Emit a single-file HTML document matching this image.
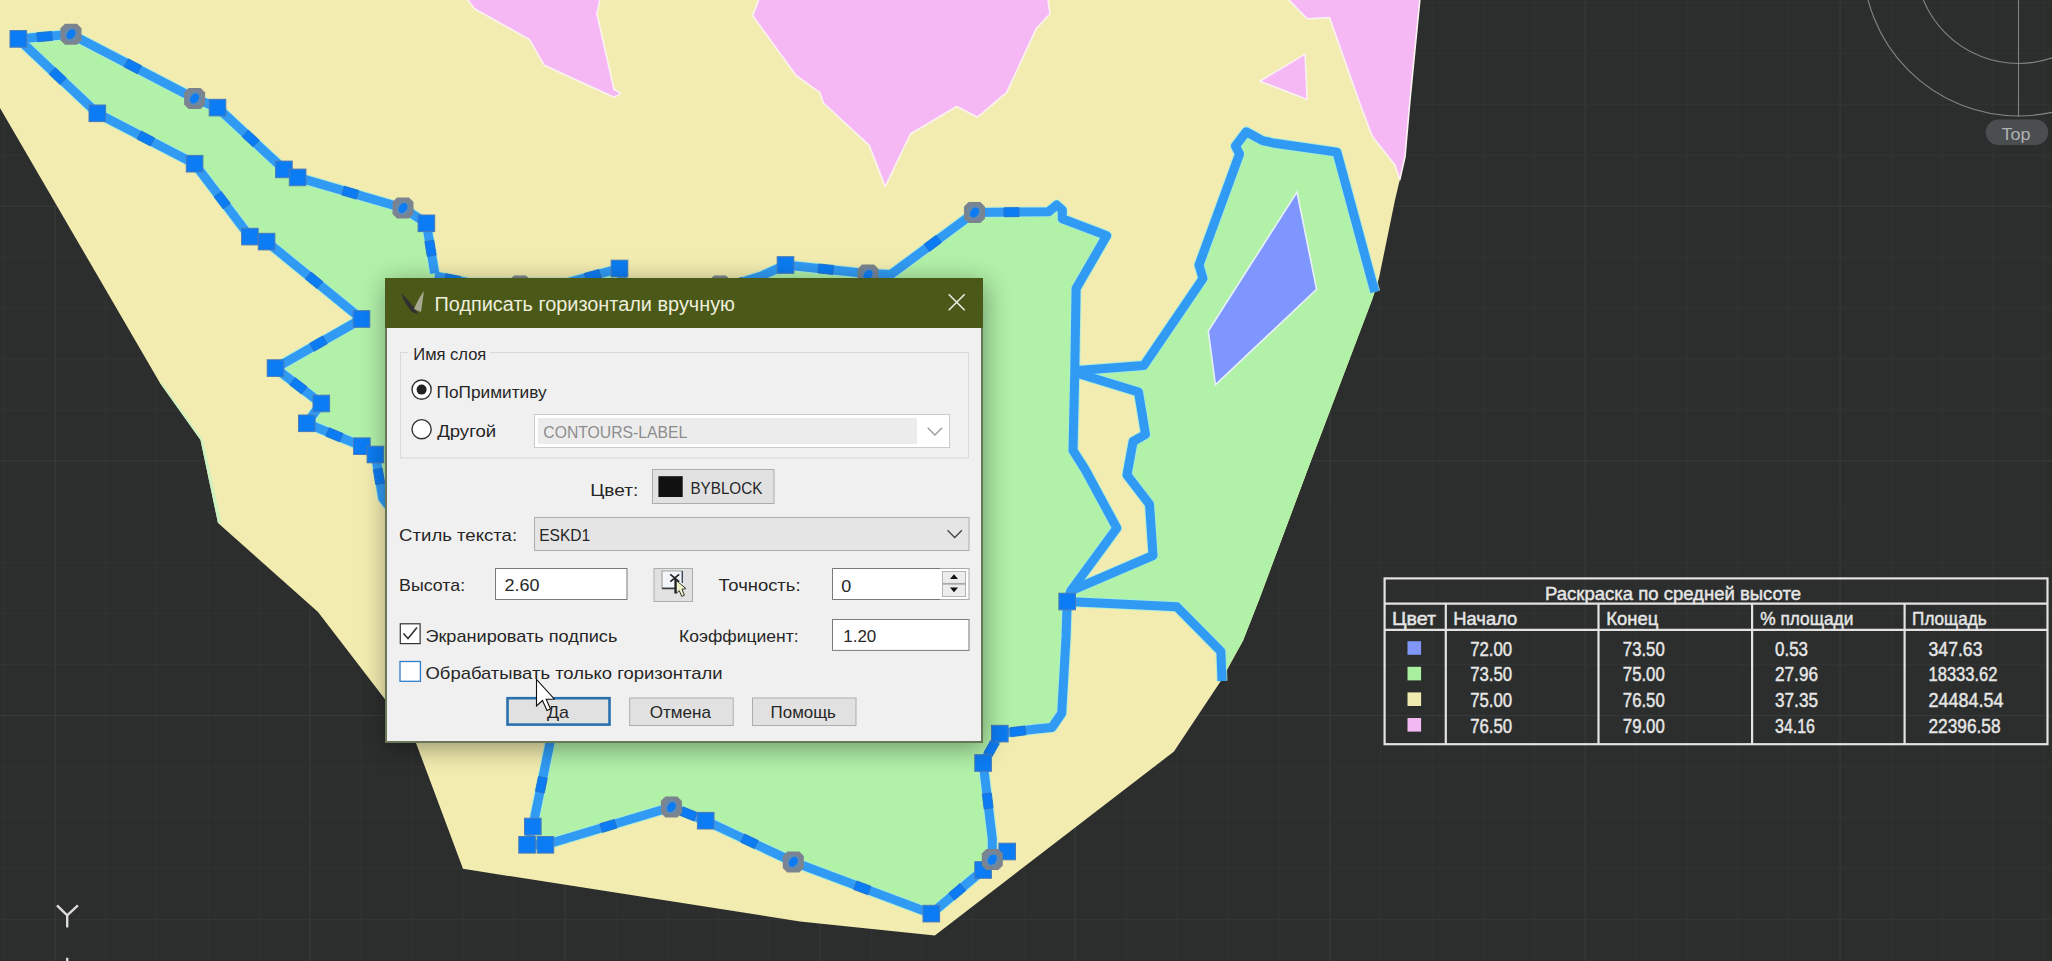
<!DOCTYPE html>
<html><head><meta charset="utf-8"><title>Подписать горизонтали вручную</title>
<style>html,body{margin:0;padding:0;width:2052px;height:961px;overflow:hidden;background:#2c2e2d;font-family:"Liberation Sans",sans-serif;}</style></head>
<body>
<div style="position:relative;width:2052px;height:961px;overflow:hidden">
<svg width="2052" height="961" style="position:absolute;left:0;top:0">
<rect width="2052" height="961" fill="#2c2e2d"/>
<rect x="3.6" y="0" width="1" height="961" fill="#333436"/>
<rect x="54.6" y="0" width="1" height="961" fill="#3a3b3e"/>
<rect x="105.6" y="0" width="1" height="961" fill="#333436"/>
<rect x="156.6" y="0" width="1" height="961" fill="#333436"/>
<rect x="207.6" y="0" width="1" height="961" fill="#333436"/>
<rect x="258.6" y="0" width="1" height="961" fill="#333436"/>
<rect x="309.6" y="0" width="1" height="961" fill="#3a3b3e"/>
<rect x="360.6" y="0" width="1" height="961" fill="#333436"/>
<rect x="411.6" y="0" width="1" height="961" fill="#333436"/>
<rect x="462.6" y="0" width="1" height="961" fill="#333436"/>
<rect x="513.6" y="0" width="1" height="961" fill="#333436"/>
<rect x="564.6" y="0" width="1" height="961" fill="#3a3b3e"/>
<rect x="615.6" y="0" width="1" height="961" fill="#333436"/>
<rect x="666.6" y="0" width="1" height="961" fill="#333436"/>
<rect x="717.6" y="0" width="1" height="961" fill="#333436"/>
<rect x="768.6" y="0" width="1" height="961" fill="#333436"/>
<rect x="819.6" y="0" width="1" height="961" fill="#3a3b3e"/>
<rect x="870.6" y="0" width="1" height="961" fill="#333436"/>
<rect x="921.6" y="0" width="1" height="961" fill="#333436"/>
<rect x="972.6" y="0" width="1" height="961" fill="#333436"/>
<rect x="1023.6" y="0" width="1" height="961" fill="#333436"/>
<rect x="1074.6" y="0" width="1" height="961" fill="#3a3b3e"/>
<rect x="1125.6" y="0" width="1" height="961" fill="#333436"/>
<rect x="1176.6" y="0" width="1" height="961" fill="#333436"/>
<rect x="1227.6" y="0" width="1" height="961" fill="#333436"/>
<rect x="1278.6" y="0" width="1" height="961" fill="#333436"/>
<rect x="1329.6" y="0" width="1" height="961" fill="#3a3b3e"/>
<rect x="1380.6" y="0" width="1" height="961" fill="#333436"/>
<rect x="1431.6" y="0" width="1" height="961" fill="#333436"/>
<rect x="1482.6" y="0" width="1" height="961" fill="#333436"/>
<rect x="1533.6" y="0" width="1" height="961" fill="#333436"/>
<rect x="1584.6" y="0" width="1" height="961" fill="#3a3b3e"/>
<rect x="1635.6" y="0" width="1" height="961" fill="#333436"/>
<rect x="1686.6" y="0" width="1" height="961" fill="#333436"/>
<rect x="1737.6" y="0" width="1" height="961" fill="#333436"/>
<rect x="1788.6" y="0" width="1" height="961" fill="#333436"/>
<rect x="1839.6" y="0" width="1" height="961" fill="#3a3b3e"/>
<rect x="1890.6" y="0" width="1" height="961" fill="#333436"/>
<rect x="1941.6" y="0" width="1" height="961" fill="#333436"/>
<rect x="1992.6" y="0" width="1" height="961" fill="#333436"/>
<rect x="2043.6" y="0" width="1" height="961" fill="#333436"/>
<rect x="0" y="1.9" width="2052" height="1" fill="#333436"/>
<rect x="0" y="52.9" width="2052" height="1" fill="#333436"/>
<rect x="0" y="103.8" width="2052" height="1" fill="#333436"/>
<rect x="0" y="154.8" width="2052" height="1" fill="#333436"/>
<rect x="0" y="205.7" width="2052" height="1" fill="#3a3b3e"/>
<rect x="0" y="256.6" width="2052" height="1" fill="#333436"/>
<rect x="0" y="307.6" width="2052" height="1" fill="#333436"/>
<rect x="0" y="358.6" width="2052" height="1" fill="#333436"/>
<rect x="0" y="409.5" width="2052" height="1" fill="#333436"/>
<rect x="0" y="460.4" width="2052" height="1" fill="#3a3b3e"/>
<rect x="0" y="511.4" width="2052" height="1" fill="#333436"/>
<rect x="0" y="562.4" width="2052" height="1" fill="#333436"/>
<rect x="0" y="613.3" width="2052" height="1" fill="#333436"/>
<rect x="0" y="664.2" width="2052" height="1" fill="#333436"/>
<rect x="0" y="715.2" width="2052" height="1" fill="#3a3b3e"/>
<rect x="0" y="766.1" width="2052" height="1" fill="#333436"/>
<rect x="0" y="817.1" width="2052" height="1" fill="#333436"/>
<rect x="0" y="868.1" width="2052" height="1" fill="#333436"/>
<rect x="0" y="919.0" width="2052" height="1" fill="#333436"/>
<polygon points="0.0,0.0 1420.0,0.0 1410.0,100.0 1405.0,156.8 1399.8,179.8 1395.0,200.0 1378.9,278.5 1372.0,300.0 1311.3,460.0 1259.0,600.0 1243.0,640.7 1221.8,679.6 1178.6,744.6 1174.0,751.5 934.8,935.5 800.0,921.5 463.0,868.8 416.0,742.9 385.6,700.0 318.0,612.0 218.0,523.0 200.5,440.0 160.0,383.0 0.0,108.0" fill="#f2ecb0"/>
<polygon points="160.0,383.0 200.5,440.0 218.0,523.0 221.5,523.0 203.0,440.0 162.0,383.0" fill="#cdf2c0"/>
<polygon points="18.3,38.9 71.0,34.3 194.6,98.4 217.5,107.6 283.9,169.4 297.6,177.4 403.0,208.0 426.4,223.3 434.7,273.3 470.0,283.0 566.0,283.0 619.5,268.5 626.0,292.0 520.0,500.0 400.0,520.0 382.7,498.2 375.4,454.5 361.9,446.2 306.8,423.3 321.3,403.5 275.5,368.1 361.5,319.0 266.6,241.6 249.9,236.6 194.6,163.7 97.3,113.3" fill="#b1f1a8"/>
<polygon points="710.0,292.0 761.4,276.0 785.5,265.0 866.0,273.5 891.0,274.4 974.5,212.5 1048.6,211.8 1056.7,205.0 1062.3,210.0 1062.3,218.7 1106.7,235.6 1076.1,288.6 1074.8,370.8 1073.0,450.4 1085.4,470.0 1116.8,528.1 1070.8,590.9 1067.2,601.5 1066.1,635.4 1061.7,713.2 1052.0,727.4 1036.0,729.0 999.8,733.6 983.1,763.0 992.3,838.9 992.3,859.6 983.1,870.0 931.3,913.6 793.3,861.9 705.7,820.7 671.4,807.0 545.4,844.8 527.1,844.8 532.8,826.5 550.0,742.9 560.0,600.0 700.0,400.0" fill="#b1f1a8"/>
<polygon points="1374.8,292.0 1336.9,152.1 1274.7,143.3 1262.5,140.6 1246.3,131.8 1235.5,146.0 1239.5,154.1 1199.0,265.0 1203.0,278.5 1143.8,365.5 1074.8,370.8 1138.5,392.0 1145.5,434.4 1133.1,441.5 1127.0,475.0 1149.5,504.2 1153.0,555.5 1070.8,590.9 1067.2,601.5 1176.9,606.8 1220.9,651.3 1221.8,677.8 1243.0,640.7 1259.0,600.0 1311.3,460.0 1372.0,300.0" fill="#b1f1a8"/>
<polygon points="466.4,-2.0 474.4,8.7 529.3,39.4 544.2,65.2 614.0,97.3 621.0,93.4 614.0,89.3 596.9,13.7 600.3,-2.0" fill="#f5b8f5" stroke="#fbf3f0" stroke-width="1.6" stroke-linejoin="round"/>
<polygon points="759.4,-2.0 752.6,15.6 796.0,75.5 820.0,92.7 823.4,103.0 869.2,145.4 885.2,186.6 910.4,134.0 956.7,106.5 977.5,117.2 1006.6,92.7 1036.3,28.6 1050.0,13.7 1047.8,-2.0" fill="#f5b8f5" stroke="#fbf3f0" stroke-width="1.6" stroke-linejoin="round"/>
<polygon points="1305.1,54.1 1259.8,81.2 1307.2,99.4" fill="#f5b8f5" stroke="#fbf3f0" stroke-width="1.6" stroke-linejoin="round"/>
<polygon points="1286.9,-2.0 1307.2,18.9 1329.5,17.6 1358.6,100.0 1370.7,132.5 1373.5,137.9 1395.0,165.0 1399.8,179.8 1405.0,156.8 1410.0,100.0 1420.0,-2.0" fill="#f5b8f5" stroke="#fbf3f0" stroke-width="1.6" stroke-linejoin="round"/>
<polygon points="1297.0,192.0 1316.6,289.3 1215.4,384.9 1208.3,331.0" fill="#7e96fe" stroke="#e8f2f6" stroke-width="1.6"/>
<polyline points="434.7,276.0 470.0,283.0 566.0,283.0 619.5,268.5 626.0,292.0 710.0,292.0 761.4,276.0 785.5,265.0 866.0,273.5 891.0,274.4 974.5,212.5 1048.6,211.8 1056.7,205.0 1062.3,210.0 1062.3,218.7 1106.7,235.6 1076.1,288.6 1074.8,370.8 1073.0,450.4 1085.4,470.0 1116.8,528.1 1070.8,590.9 1067.2,601.5 1066.1,635.4 1061.7,713.2 1052.0,727.4 1036.0,729.0 999.8,733.6 983.1,763.0 992.3,838.9 992.3,859.6 983.1,870.0 931.3,913.6 793.3,861.9 705.7,820.7 671.4,807.0 545.4,844.8 527.1,844.8 532.8,826.5 550.0,742.9 560.0,700.0" fill="none" stroke="#a6ecde" stroke-width="11" stroke-linejoin="round" opacity="0.8"/>
<polyline points="18.3,38.9 71.0,34.3 194.6,98.4 217.5,107.6 283.9,169.4 297.6,177.4 403.0,208.0 426.4,223.3 434.7,273.3" fill="none" stroke="#a6ecde" stroke-width="11" stroke-linejoin="round" opacity="0.8"/>
<polyline points="18.3,38.9 97.3,113.3 194.6,163.7 249.9,236.6 266.6,241.6 361.5,319.0 275.5,368.1 321.3,403.5 306.8,423.3 361.9,446.2 375.4,454.5 382.7,498.2 400.0,520.0" fill="none" stroke="#a6ecde" stroke-width="11" stroke-linejoin="round" opacity="0.8"/>
<polyline points="1374.8,292.0 1336.9,152.1 1274.7,143.3 1262.5,140.6 1246.3,131.8 1235.5,146.0 1239.5,154.1 1199.0,265.0 1203.0,278.5 1143.8,365.5 1074.8,370.8" fill="none" stroke="#a6ecde" stroke-width="11" stroke-linejoin="round" opacity="0.8"/>
<polyline points="1074.8,372.5 1138.5,392.0 1145.5,434.4 1133.1,441.5 1127.0,475.0 1149.5,504.2 1153.0,555.5 1070.8,590.9" fill="none" stroke="#a6ecde" stroke-width="11" stroke-linejoin="round" opacity="0.8"/>
<polyline points="1067.2,601.5 1176.9,606.8 1220.9,651.3 1222.0,681.0" fill="none" stroke="#a6ecde" stroke-width="11" stroke-linejoin="round" opacity="0.8"/>
<polyline points="434.7,276.0 470.0,283.0 566.0,283.0 619.5,268.5 626.0,292.0 710.0,292.0 761.4,276.0 785.5,265.0 866.0,273.5 891.0,274.4 974.5,212.5 1048.6,211.8 1056.7,205.0 1062.3,210.0 1062.3,218.7 1106.7,235.6 1076.1,288.6 1074.8,370.8 1073.0,450.4 1085.4,470.0 1116.8,528.1 1070.8,590.9 1067.2,601.5 1066.1,635.4 1061.7,713.2 1052.0,727.4 1036.0,729.0 999.8,733.6 983.1,763.0 992.3,838.9 992.3,859.6 983.1,870.0 931.3,913.6 793.3,861.9 705.7,820.7 671.4,807.0 545.4,844.8 527.1,844.8 532.8,826.5 550.0,742.9 560.0,700.0" fill="none" stroke="#319bf4" stroke-width="9" stroke-linejoin="round"/>
<polyline points="18.3,38.9 71.0,34.3 194.6,98.4 217.5,107.6 283.9,169.4 297.6,177.4 403.0,208.0 426.4,223.3 434.7,273.3" fill="none" stroke="#319bf4" stroke-width="9" stroke-linejoin="round"/>
<polyline points="18.3,38.9 97.3,113.3 194.6,163.7 249.9,236.6 266.6,241.6 361.5,319.0 275.5,368.1 321.3,403.5 306.8,423.3 361.9,446.2 375.4,454.5 382.7,498.2 400.0,520.0" fill="none" stroke="#319bf4" stroke-width="9" stroke-linejoin="round"/>
<polyline points="1374.8,292.0 1336.9,152.1 1274.7,143.3 1262.5,140.6 1246.3,131.8 1235.5,146.0 1239.5,154.1 1199.0,265.0 1203.0,278.5 1143.8,365.5 1074.8,370.8" fill="none" stroke="#319bf4" stroke-width="9" stroke-linejoin="round"/>
<polyline points="1074.8,372.5 1138.5,392.0 1145.5,434.4 1133.1,441.5 1127.0,475.0 1149.5,504.2 1153.0,555.5 1070.8,590.9" fill="none" stroke="#319bf4" stroke-width="9" stroke-linejoin="round"/>
<polyline points="1067.2,601.5 1176.9,606.8 1220.9,651.3 1222.0,681.0" fill="none" stroke="#319bf4" stroke-width="9" stroke-linejoin="round"/>
<rect x="-7.5" y="-4.5" width="15" height="9" fill="#0b7cf3" stroke="#2a6fc0" stroke-width="0.8" transform="translate(44.6,36.6) rotate(-5.0)"/>
<rect x="-7.5" y="-4.5" width="15" height="9" fill="#0b7cf3" stroke="#2a6fc0" stroke-width="0.8" transform="translate(132.8,66.3) rotate(27.4)"/>
<rect x="-7.5" y="-4.5" width="15" height="9" fill="#0b7cf3" stroke="#2a6fc0" stroke-width="0.8" transform="translate(250.7,138.5) rotate(42.9)"/>
<rect x="-7.5" y="-4.5" width="15" height="9" fill="#0b7cf3" stroke="#2a6fc0" stroke-width="0.8" transform="translate(350.3,192.7) rotate(16.2)"/>
<rect x="-7.5" y="-4.5" width="15" height="9" fill="#0b7cf3" stroke="#2a6fc0" stroke-width="0.8" transform="translate(430.5,248.3) rotate(80.6)"/>
<rect x="-7.5" y="-4.5" width="15" height="9" fill="#0b7cf3" stroke="#2a6fc0" stroke-width="0.8" transform="translate(57.8,76.1) rotate(43.3)"/>
<rect x="-7.5" y="-4.5" width="15" height="9" fill="#0b7cf3" stroke="#2a6fc0" stroke-width="0.8" transform="translate(145.9,138.5) rotate(27.4)"/>
<rect x="-7.5" y="-4.5" width="15" height="9" fill="#0b7cf3" stroke="#2a6fc0" stroke-width="0.8" transform="translate(222.2,200.1) rotate(52.8)"/>
<rect x="-7.5" y="-4.5" width="15" height="9" fill="#0b7cf3" stroke="#2a6fc0" stroke-width="0.8" transform="translate(314.1,280.3) rotate(39.2)"/>
<rect x="-7.5" y="-4.5" width="15" height="9" fill="#0b7cf3" stroke="#2a6fc0" stroke-width="0.8" transform="translate(318.5,343.6) rotate(150.3)"/>
<rect x="-7.5" y="-4.5" width="15" height="9" fill="#0b7cf3" stroke="#2a6fc0" stroke-width="0.8" transform="translate(298.4,385.8) rotate(37.7)"/>
<rect x="-7.5" y="-4.5" width="15" height="9" fill="#0b7cf3" stroke="#2a6fc0" stroke-width="0.8" transform="translate(334.4,434.8) rotate(22.6)"/>
<rect x="-7.5" y="-4.5" width="15" height="9" fill="#0b7cf3" stroke="#2a6fc0" stroke-width="0.8" transform="translate(379.0,476.4) rotate(80.5)"/>
<rect x="-7.5" y="-4.5" width="15" height="9" fill="#0b7cf3" stroke="#2a6fc0" stroke-width="0.8" transform="translate(452.4,279.5) rotate(11.2)"/>
<rect x="-7.5" y="-4.5" width="15" height="9" fill="#0b7cf3" stroke="#2a6fc0" stroke-width="0.8" transform="translate(518.0,283.0) rotate(0.0)"/>
<rect x="-7.5" y="-4.5" width="15" height="9" fill="#0b7cf3" stroke="#2a6fc0" stroke-width="0.8" transform="translate(592.8,275.8) rotate(-15.2)"/>
<rect x="-7.5" y="-4.5" width="15" height="9" fill="#0b7cf3" stroke="#2a6fc0" stroke-width="0.8" transform="translate(668.0,292.0) rotate(0.0)"/>
<rect x="-7.5" y="-4.5" width="15" height="9" fill="#0b7cf3" stroke="#2a6fc0" stroke-width="0.8" transform="translate(735.7,284.0) rotate(-17.3)"/>
<rect x="-7.5" y="-4.5" width="15" height="9" fill="#0b7cf3" stroke="#2a6fc0" stroke-width="0.8" transform="translate(825.8,269.2) rotate(6.0)"/>
<rect x="-7.5" y="-4.5" width="15" height="9" fill="#0b7cf3" stroke="#2a6fc0" stroke-width="0.8" transform="translate(932.8,243.4) rotate(-36.6)"/>
<rect x="-7.5" y="-4.5" width="15" height="9" fill="#0b7cf3" stroke="#2a6fc0" stroke-width="0.8" transform="translate(1011.5,212.2) rotate(-0.5)"/>
<rect x="-7.5" y="-4.5" width="15" height="9" fill="#0b7cf3" stroke="#2a6fc0" stroke-width="0.8" transform="translate(1017.9,731.3) rotate(172.8)"/>
<rect x="-7.5" y="-4.5" width="15" height="9" fill="#0b7cf3" stroke="#2a6fc0" stroke-width="0.8" transform="translate(991.5,748.3) rotate(119.6)"/>
<rect x="-7.5" y="-4.5" width="15" height="9" fill="#0b7cf3" stroke="#2a6fc0" stroke-width="0.8" transform="translate(987.7,801.0) rotate(83.1)"/>
<rect x="-7.5" y="-4.5" width="15" height="9" fill="#0b7cf3" stroke="#2a6fc0" stroke-width="0.8" transform="translate(957.2,891.8) rotate(139.9)"/>
<rect x="-7.5" y="-4.5" width="15" height="9" fill="#0b7cf3" stroke="#2a6fc0" stroke-width="0.8" transform="translate(862.3,887.8) rotate(-159.5)"/>
<rect x="-7.5" y="-4.5" width="15" height="9" fill="#0b7cf3" stroke="#2a6fc0" stroke-width="0.8" transform="translate(749.5,841.3) rotate(-154.8)"/>
<rect x="-7.5" y="-4.5" width="15" height="9" fill="#0b7cf3" stroke="#2a6fc0" stroke-width="0.8" transform="translate(688.5,813.9) rotate(-158.2)"/>
<rect x="-7.5" y="-4.5" width="15" height="9" fill="#0b7cf3" stroke="#2a6fc0" stroke-width="0.8" transform="translate(608.4,825.9) rotate(163.3)"/>
<rect x="-7.5" y="-4.5" width="15" height="9" fill="#0b7cf3" stroke="#2a6fc0" stroke-width="0.8" transform="translate(541.4,784.7) rotate(-78.4)"/>
<rect x="-7.5" y="-4.5" width="15" height="9" fill="#0b7cf3" stroke="#2a6fc0" stroke-width="0.8" transform="translate(555.0,721.5) rotate(-76.9)"/>
<rect x="10.0" y="30.6" width="16.6" height="16.6" fill="#0b7cf3" stroke="#4a7bb8" stroke-width="1"/>
<rect x="89.0" y="105.0" width="16.6" height="16.6" fill="#0b7cf3" stroke="#4a7bb8" stroke-width="1"/>
<rect x="186.3" y="155.4" width="16.6" height="16.6" fill="#0b7cf3" stroke="#4a7bb8" stroke-width="1"/>
<rect x="209.2" y="99.3" width="16.6" height="16.6" fill="#0b7cf3" stroke="#4a7bb8" stroke-width="1"/>
<rect x="275.6" y="161.1" width="16.6" height="16.6" fill="#0b7cf3" stroke="#4a7bb8" stroke-width="1"/>
<rect x="289.3" y="169.1" width="16.6" height="16.6" fill="#0b7cf3" stroke="#4a7bb8" stroke-width="1"/>
<rect x="418.1" y="215.0" width="16.6" height="16.6" fill="#0b7cf3" stroke="#4a7bb8" stroke-width="1"/>
<rect x="353.2" y="310.7" width="16.6" height="16.6" fill="#0b7cf3" stroke="#4a7bb8" stroke-width="1"/>
<rect x="267.2" y="359.8" width="16.6" height="16.6" fill="#0b7cf3" stroke="#4a7bb8" stroke-width="1"/>
<rect x="313.0" y="395.2" width="16.6" height="16.6" fill="#0b7cf3" stroke="#4a7bb8" stroke-width="1"/>
<rect x="298.5" y="415.0" width="16.6" height="16.6" fill="#0b7cf3" stroke="#4a7bb8" stroke-width="1"/>
<rect x="353.6" y="437.9" width="16.6" height="16.6" fill="#0b7cf3" stroke="#4a7bb8" stroke-width="1"/>
<rect x="367.1" y="446.2" width="16.6" height="16.6" fill="#0b7cf3" stroke="#4a7bb8" stroke-width="1"/>
<rect x="611.2" y="260.2" width="16.6" height="16.6" fill="#0b7cf3" stroke="#4a7bb8" stroke-width="1"/>
<rect x="777.2" y="256.7" width="16.6" height="16.6" fill="#0b7cf3" stroke="#4a7bb8" stroke-width="1"/>
<rect x="1058.9" y="593.2" width="16.6" height="16.6" fill="#0b7cf3" stroke="#4a7bb8" stroke-width="1"/>
<rect x="991.5" y="725.3" width="16.6" height="16.6" fill="#0b7cf3" stroke="#4a7bb8" stroke-width="1"/>
<rect x="974.8" y="754.7" width="16.6" height="16.6" fill="#0b7cf3" stroke="#4a7bb8" stroke-width="1"/>
<rect x="998.9" y="843.2" width="16.6" height="16.6" fill="#0b7cf3" stroke="#4a7bb8" stroke-width="1"/>
<rect x="974.8" y="861.7" width="16.6" height="16.6" fill="#0b7cf3" stroke="#4a7bb8" stroke-width="1"/>
<rect x="923.0" y="905.3" width="16.6" height="16.6" fill="#0b7cf3" stroke="#4a7bb8" stroke-width="1"/>
<rect x="697.4" y="812.4" width="16.6" height="16.6" fill="#0b7cf3" stroke="#4a7bb8" stroke-width="1"/>
<rect x="524.5" y="818.2" width="16.6" height="16.6" fill="#0b7cf3" stroke="#4a7bb8" stroke-width="1"/>
<rect x="518.8" y="836.5" width="16.6" height="16.6" fill="#0b7cf3" stroke="#4a7bb8" stroke-width="1"/>
<rect x="537.1" y="836.5" width="16.6" height="16.6" fill="#0b7cf3" stroke="#4a7bb8" stroke-width="1"/>
<rect x="241.6" y="228.3" width="16.6" height="16.6" fill="#0b7cf3" stroke="#4a7bb8" stroke-width="1"/>
<rect x="258.3" y="233.3" width="16.6" height="16.6" fill="#0b7cf3" stroke="#4a7bb8" stroke-width="1"/>
<polygon points="65.0,23.8 77.0,23.8 81.5,28.3 81.5,40.3 77.0,44.8 65.0,44.8 60.5,40.3 60.5,28.3" fill="#7b848e"/><circle cx="71.0" cy="34.3" r="7.5" fill="#6b88a6"/><ellipse cx="71.0" cy="34.3" rx="4" ry="5.5" transform="rotate(35 71.0 34.3)" fill="#0b7cf3"/>
<polygon points="188.6,87.9 200.6,87.9 205.1,92.4 205.1,104.4 200.6,108.9 188.6,108.9 184.1,104.4 184.1,92.4" fill="#7b848e"/><circle cx="194.6" cy="98.4" r="7.5" fill="#6b88a6"/><ellipse cx="194.6" cy="98.4" rx="4" ry="5.5" transform="rotate(35 194.6 98.4)" fill="#0b7cf3"/>
<polygon points="397.0,197.5 409.0,197.5 413.5,202.0 413.5,214.0 409.0,218.5 397.0,218.5 392.5,214.0 392.5,202.0" fill="#7b848e"/><circle cx="403.0" cy="208.0" r="7.5" fill="#6b88a6"/><ellipse cx="403.0" cy="208.0" rx="4" ry="5.5" transform="rotate(35 403.0 208.0)" fill="#0b7cf3"/>
<polygon points="968.5,202.0 980.5,202.0 985.0,206.5 985.0,218.5 980.5,223.0 968.5,223.0 964.0,218.5 964.0,206.5" fill="#7b848e"/><circle cx="974.5" cy="212.5" r="7.5" fill="#6b88a6"/><ellipse cx="974.5" cy="212.5" rx="4" ry="5.5" transform="rotate(35 974.5 212.5)" fill="#0b7cf3"/>
<polygon points="665.4,796.5 677.4,796.5 681.9,801.0 681.9,813.0 677.4,817.5 665.4,817.5 660.9,813.0 660.9,801.0" fill="#7b848e"/><circle cx="671.4" cy="807.0" r="7.5" fill="#6b88a6"/><ellipse cx="671.4" cy="807.0" rx="4" ry="5.5" transform="rotate(35 671.4 807.0)" fill="#0b7cf3"/>
<polygon points="787.3,851.4 799.3,851.4 803.8,855.9 803.8,867.9 799.3,872.4 787.3,872.4 782.8,867.9 782.8,855.9" fill="#7b848e"/><circle cx="793.3" cy="861.9" r="7.5" fill="#6b88a6"/><ellipse cx="793.3" cy="861.9" rx="4" ry="5.5" transform="rotate(35 793.3 861.9)" fill="#0b7cf3"/>
<polygon points="986.3,849.1 998.3,849.1 1002.8,853.6 1002.8,865.6 998.3,870.1 986.3,870.1 981.8,865.6 981.8,853.6" fill="#7b848e"/><circle cx="992.3" cy="859.6" r="7.5" fill="#6b88a6"/><ellipse cx="992.3" cy="859.6" rx="4" ry="5.5" transform="rotate(35 992.3 859.6)" fill="#0b7cf3"/>
<polygon points="862.0,264.5 874.0,264.5 878.5,269.0 878.5,281.0 874.0,285.5 862.0,285.5 857.5,281.0 857.5,269.0" fill="#7b848e"/><circle cx="868.0" cy="275.0" r="7.5" fill="#6b88a6"/><ellipse cx="868.0" cy="275.0" rx="4" ry="5.5" transform="rotate(35 868.0 275.0)" fill="#0b7cf3"/>
<polygon points="714.0,275.5 726.0,275.5 730.5,280.0 730.5,292.0 726.0,296.5 714.0,296.5 709.5,292.0 709.5,280.0" fill="#7b848e"/><circle cx="720.0" cy="286.0" r="7.5" fill="#6b88a6"/><ellipse cx="720.0" cy="286.0" rx="4" ry="5.5" transform="rotate(35 720.0 286.0)" fill="#0b7cf3"/>
<polygon points="514.0,275.5 526.0,275.5 530.5,280.0 530.5,292.0 526.0,296.5 514.0,296.5 509.5,292.0 509.5,280.0" fill="#7b848e"/><circle cx="520.0" cy="286.0" r="7.5" fill="#6b88a6"/><ellipse cx="520.0" cy="286.0" rx="4" ry="5.5" transform="rotate(35 520.0 286.0)" fill="#0b7cf3"/>
</svg>
<svg width="2052" height="961" style="position:absolute;left:0;top:0">
<g fill="none" stroke="#7f8686" stroke-width="1.1">
<circle cx="2018.5" cy="-39.5" r="155.5"/><circle cx="2018.5" cy="-39.5" r="103"/>
<line x1="2018.5" y1="0" x2="2018.5" y2="116.5"/></g>
<rect x="1985.7" y="119.6" width="62.5" height="25.4" rx="12.7" fill="#4a4e50"/>
<text x="2001.5" y="139.5" font-family='"Liberation Sans",sans-serif' font-size="17" fill="#aeb2b2" text-anchor="start" textLength="29" lengthAdjust="spacingAndGlyphs" >Top</text>
<g stroke="#dcdcdc" stroke-width="2.4" fill="none"><polyline points="57,905.3 67.2,915.4 77.9,905.3"/><line x1="67.2" y1="915.4" x2="67.2" y2="927.4"/><line x1="67.2" y1="957.8" x2="67.2" y2="962"/></g>
<g stroke="#e3e3e3" stroke-width="2.2" fill="none">
<rect x="1384.6" y="578.4" width="662.9" height="165.8"/>
<line x1="1384.6" y1="603.7" x2="2047.5" y2="603.7"/><line x1="1384.6" y1="629.9" x2="2047.5" y2="629.9"/>
<line x1="1445.8" y1="603.7" x2="1445.8" y2="744.2"/>
<line x1="1598.5" y1="603.7" x2="1598.5" y2="744.2"/>
<line x1="1752.1" y1="603.7" x2="1752.1" y2="744.2"/>
<line x1="1904.6" y1="603.7" x2="1904.6" y2="744.2"/>
</g>
<text x="1545" y="599.6" font-family='"Liberation Sans",sans-serif' font-size="19" fill="#e6e6e6" text-anchor="start" textLength="256" lengthAdjust="spacingAndGlyphs" stroke="#e6e6e6" stroke-width="0.45">Раскраска по средней высоте</text>
<text x="1392.1" y="625.2" font-family='"Liberation Sans",sans-serif' font-size="19" fill="#e6e6e6" text-anchor="start" textLength="44" lengthAdjust="spacingAndGlyphs" stroke="#e6e6e6" stroke-width="0.45">Цвет</text>
<text x="1453.3" y="625.2" font-family='"Liberation Sans",sans-serif' font-size="19" fill="#e6e6e6" text-anchor="start" textLength="64" lengthAdjust="spacingAndGlyphs" stroke="#e6e6e6" stroke-width="0.45">Начало</text>
<text x="1606.3" y="625.2" font-family='"Liberation Sans",sans-serif' font-size="19" fill="#e6e6e6" text-anchor="start" textLength="52" lengthAdjust="spacingAndGlyphs" stroke="#e6e6e6" stroke-width="0.45">Конец</text>
<text x="1760.3" y="625.2" font-family='"Liberation Sans",sans-serif' font-size="19" fill="#e6e6e6" text-anchor="start" textLength="93" lengthAdjust="spacingAndGlyphs" stroke="#e6e6e6" stroke-width="0.45">% площади</text>
<text x="1912.1" y="625.2" font-family='"Liberation Sans",sans-serif' font-size="19" fill="#e6e6e6" text-anchor="start" textLength="74.5" lengthAdjust="spacingAndGlyphs" stroke="#e6e6e6" stroke-width="0.45">Площадь</text>
<rect x="1407.5" y="641.2" width="13.6" height="13.6" fill="#8096f8"/>
<text x="1470.2" y="655.8" font-family='"Liberation Sans",sans-serif' font-size="20" fill="#e6e6e6" text-anchor="start" textLength="42" lengthAdjust="spacingAndGlyphs" stroke="#e6e6e6" stroke-width="0.45">72.00</text>
<text x="1622.8" y="655.8" font-family='"Liberation Sans",sans-serif' font-size="20" fill="#e6e6e6" text-anchor="start" textLength="42" lengthAdjust="spacingAndGlyphs" stroke="#e6e6e6" stroke-width="0.45">73.50</text>
<text x="1775" y="655.8" font-family='"Liberation Sans",sans-serif' font-size="20" fill="#e6e6e6" text-anchor="start" textLength="33" lengthAdjust="spacingAndGlyphs" stroke="#e6e6e6" stroke-width="0.45">0.53</text>
<text x="1928.5" y="655.8" font-family='"Liberation Sans",sans-serif' font-size="20" fill="#e6e6e6" text-anchor="start" textLength="54" lengthAdjust="spacingAndGlyphs" stroke="#e6e6e6" stroke-width="0.45">347.63</text>
<rect x="1407.5" y="666.8" width="13.6" height="13.6" fill="#a8f0a0"/>
<text x="1470.2" y="681.4" font-family='"Liberation Sans",sans-serif' font-size="20" fill="#e6e6e6" text-anchor="start" textLength="42" lengthAdjust="spacingAndGlyphs" stroke="#e6e6e6" stroke-width="0.45">73.50</text>
<text x="1622.8" y="681.4" font-family='"Liberation Sans",sans-serif' font-size="20" fill="#e6e6e6" text-anchor="start" textLength="42" lengthAdjust="spacingAndGlyphs" stroke="#e6e6e6" stroke-width="0.45">75.00</text>
<text x="1775" y="681.4" font-family='"Liberation Sans",sans-serif' font-size="20" fill="#e6e6e6" text-anchor="start" textLength="43" lengthAdjust="spacingAndGlyphs" stroke="#e6e6e6" stroke-width="0.45">27.96</text>
<text x="1928.5" y="681.4" font-family='"Liberation Sans",sans-serif' font-size="20" fill="#e6e6e6" text-anchor="start" textLength="69" lengthAdjust="spacingAndGlyphs" stroke="#e6e6e6" stroke-width="0.45">18333.62</text>
<rect x="1407.5" y="692.4" width="13.6" height="13.6" fill="#f0eab0"/>
<text x="1470.2" y="707.0" font-family='"Liberation Sans",sans-serif' font-size="20" fill="#e6e6e6" text-anchor="start" textLength="42" lengthAdjust="spacingAndGlyphs" stroke="#e6e6e6" stroke-width="0.45">75.00</text>
<text x="1622.8" y="707.0" font-family='"Liberation Sans",sans-serif' font-size="20" fill="#e6e6e6" text-anchor="start" textLength="42" lengthAdjust="spacingAndGlyphs" stroke="#e6e6e6" stroke-width="0.45">76.50</text>
<text x="1775" y="707.0" font-family='"Liberation Sans",sans-serif' font-size="20" fill="#e6e6e6" text-anchor="start" textLength="43" lengthAdjust="spacingAndGlyphs" stroke="#e6e6e6" stroke-width="0.45">37.35</text>
<text x="1928.5" y="707.0" font-family='"Liberation Sans",sans-serif' font-size="20" fill="#e6e6e6" text-anchor="start" textLength="75" lengthAdjust="spacingAndGlyphs" stroke="#e6e6e6" stroke-width="0.45">24484.54</text>
<rect x="1407.5" y="718.0" width="13.6" height="13.6" fill="#f2b8f2"/>
<text x="1470.2" y="732.6" font-family='"Liberation Sans",sans-serif' font-size="20" fill="#e6e6e6" text-anchor="start" textLength="42" lengthAdjust="spacingAndGlyphs" stroke="#e6e6e6" stroke-width="0.45">76.50</text>
<text x="1622.8" y="732.6" font-family='"Liberation Sans",sans-serif' font-size="20" fill="#e6e6e6" text-anchor="start" textLength="42" lengthAdjust="spacingAndGlyphs" stroke="#e6e6e6" stroke-width="0.45">79.00</text>
<text x="1775" y="732.6" font-family='"Liberation Sans",sans-serif' font-size="20" fill="#e6e6e6" text-anchor="start" textLength="40" lengthAdjust="spacingAndGlyphs" stroke="#e6e6e6" stroke-width="0.45">34.16</text>
<text x="1928.5" y="732.6" font-family='"Liberation Sans",sans-serif' font-size="20" fill="#e6e6e6" text-anchor="start" textLength="72" lengthAdjust="spacingAndGlyphs" stroke="#e6e6e6" stroke-width="0.45">22396.58</text>
</svg>
<div style="position:absolute;left:385px;top:278px;width:598px;height:465px;background:#f0f0f0;box-shadow:2px 5px 24px rgba(0,0,0,0.38);"></div>
<div style="position:absolute;left:385px;top:278px;width:598px;height:50px;background:#4b5918;"></div>
<svg width="2052" height="961" style="position:absolute;left:0;top:0">
<path d="M386,328 V742 H982 V328" fill="none" stroke="#687757" stroke-width="2"/>
<path d="M401,293 C408,300 414,306 418,314 L412,312 C407,306 403,300 401,293 Z" fill="#303030"/>
<path d="M424,291 L421,312 L414,309 C417,302 420,296 424,291 Z" fill="#a8a890"/>
<text x="434.5" y="310.5" font-family='"Liberation Sans",sans-serif' font-size="20" fill="#eeeedc" text-anchor="start" textLength="300.5" lengthAdjust="spacingAndGlyphs" >Подписать горизонтали вручную</text>
<g stroke="#ecece4" stroke-width="1.6"><line x1="948.7" y1="294.3" x2="964.7" y2="310.3"/><line x1="964.7" y1="294.3" x2="948.7" y2="310.3"/></g>
<rect x="400.5" y="352.5" width="568" height="105.5" fill="none" stroke="#d9d9d9" stroke-width="1"/>
<rect x="408" y="345" width="82" height="14" fill="#f0f0f0"/>
<text x="413.3" y="360.1" font-family='"Liberation Sans",sans-serif' font-size="17" fill="#262626" text-anchor="start" textLength="73" lengthAdjust="spacingAndGlyphs" >Имя слоя</text>
<circle cx="421.6" cy="389.6" r="9.6" fill="#fff" stroke="#333" stroke-width="1.4"/><circle cx="421.6" cy="389.6" r="5" fill="#222"/>
<text x="436.6" y="397.5" font-family='"Liberation Sans",sans-serif' font-size="17" fill="#262626" text-anchor="start" textLength="110" lengthAdjust="spacingAndGlyphs" >ПоПримитиву</text>
<circle cx="421.6" cy="429.2" r="9.6" fill="#fff" stroke="#333" stroke-width="1.4"/>
<text x="437.2" y="437.1" font-family='"Liberation Sans",sans-serif' font-size="17" fill="#262626" text-anchor="start" textLength="59" lengthAdjust="spacingAndGlyphs" >Другой</text>
<rect x="534.5" y="414.5" width="415" height="33" fill="#fff" stroke="#cbcbcb" stroke-width="1"/>
<rect x="538" y="418" width="379" height="26" fill="#ececec"/>
<polyline points="927.7,427.8 934.9,435 942.1,427.8" fill="none" stroke="#9a9a9a" stroke-width="1.3"/>
<text x="543.3" y="437.6" font-family='"Liberation Sans",sans-serif' font-size="17" fill="#8c8c8c" text-anchor="start" textLength="144" lengthAdjust="spacingAndGlyphs" >CONTOURS-LABEL</text>
<text x="590.2" y="496.4" font-family='"Liberation Sans",sans-serif' font-size="17" fill="#262626" text-anchor="start" textLength="48" lengthAdjust="spacingAndGlyphs" >Цвет:</text>
<rect x="652.5" y="469.5" width="121.5" height="34" fill="#e1e1e1" stroke="#adadad" stroke-width="1"/>
<rect x="658.4" y="476.2" width="24.3" height="20.8" fill="#111"/>
<text x="690.4" y="494.3" font-family='"Liberation Sans",sans-serif' font-size="17" fill="#262626" text-anchor="start" textLength="72" lengthAdjust="spacingAndGlyphs" >BYBLOCK</text>
<text x="399.1" y="540.7" font-family='"Liberation Sans",sans-serif' font-size="17" fill="#262626" text-anchor="start" textLength="118" lengthAdjust="spacingAndGlyphs" >Стиль текста:</text>
<rect x="534.5" y="517.5" width="434.5" height="33" fill="#e5e5e5" stroke="#adadad" stroke-width="1"/>
<text x="539.2" y="541.1" font-family='"Liberation Sans",sans-serif' font-size="17" fill="#262626" text-anchor="start" textLength="51" lengthAdjust="spacingAndGlyphs" >ESKD1</text>
<polyline points="947.5,530.3 954.7,537.5 961.9,530.3" fill="none" stroke="#444" stroke-width="1.3"/>
<text x="399.1" y="591.3" font-family='"Liberation Sans",sans-serif' font-size="17" fill="#262626" text-anchor="start" textLength="66" lengthAdjust="spacingAndGlyphs" >Высота:</text>
<rect x="495.5" y="568.5" width="131.5" height="31" fill="#fff" stroke="#7a7a7a" stroke-width="1"/>
<text x="504.4" y="591.3" font-family='"Liberation Sans",sans-serif' font-size="17" fill="#262626" text-anchor="start" textLength="35" lengthAdjust="spacingAndGlyphs" >2.60</text>
<rect x="654" y="568.5" width="38.5" height="33" fill="#e1e1e1" stroke="#adadad" stroke-width="1"/>
<rect x="662" y="571" width="20.5" height="17.4" fill="#f2f6fb"/><path d="M662,588.4 V571 H682.5" fill="none" stroke="#a4a4a4" stroke-width="1.2"/><path d="M662,588.4 H675" fill="none" stroke="#3c3c3c" stroke-width="1.7"/><path d="M682.3,571 V583" fill="none" stroke="#3e475a" stroke-width="1.4"/><path d="M670.3,574.3 L679.2,581.7 M679.2,574.3 L670.3,581.7 M675.2,577.5 V593.5" fill="none" stroke="#1e1e1e" stroke-width="1.6"/><path d="M676.3,580.5 L686,588.6 L682,589.2 L684.4,595.2 L681.8,596.4 L679.2,590.6 L676.3,593.4 Z" fill="#eef0c8" stroke="#1e1e1e" stroke-width="0.9"/>
<text x="718.5" y="591.3" font-family='"Liberation Sans",sans-serif' font-size="17" fill="#262626" text-anchor="start" textLength="82" lengthAdjust="spacingAndGlyphs" >Точность:</text>
<rect x="832.5" y="568.5" width="136.5" height="31" fill="#fff" stroke="#aaaaaa" stroke-width="1"/>
<path d="M940,568.5 H832.5 V599.5 H940" fill="none" stroke="#7a7a7a" stroke-width="1"/>
<rect x="942.5" y="571.5" width="23" height="25" fill="#ececec" stroke="#b4b4b4" stroke-width="1"/><line x1="942.5" y1="583.8" x2="965.5" y2="583.8" stroke="#a9a9a9" stroke-width="1.8"/>
<path d="M950,579 l4,-4.8 l4,4.8 z M950,587.6 l4,4.6 l4,-4.6 z" fill="#111"/>
<text x="841.3" y="591.6" font-family='"Liberation Sans",sans-serif' font-size="17" fill="#262626" text-anchor="start" textLength="10" lengthAdjust="spacingAndGlyphs" >0</text>
<rect x="400.3" y="623.8" width="19.8" height="19.8" fill="#fff" stroke="#333" stroke-width="1.2"/>
<polyline points="403.5,633.5 408,638.5 417,627.5" fill="none" stroke="#333" stroke-width="1.6"/>
<text x="425.4" y="641.6" font-family='"Liberation Sans",sans-serif' font-size="17" fill="#262626" text-anchor="start" textLength="192" lengthAdjust="spacingAndGlyphs" >Экранировать подпись</text>
<text x="679" y="641.6" font-family='"Liberation Sans",sans-serif' font-size="17" fill="#262626" text-anchor="start" textLength="119.6" lengthAdjust="spacingAndGlyphs" >Коэффициент:</text>
<rect x="832.5" y="619.5" width="136.5" height="30.9" fill="#fff" stroke="#7a7a7a" stroke-width="1"/>
<text x="843.3" y="641.6" font-family='"Liberation Sans",sans-serif' font-size="17" fill="#262626" text-anchor="start" textLength="33" lengthAdjust="spacingAndGlyphs" >1.20</text>
<rect x="400" y="661.5" width="20.4" height="19.8" fill="#fff" stroke="#2f7ccc" stroke-width="1.3"/>
<text x="425.5" y="678.8" font-family='"Liberation Sans",sans-serif' font-size="17" fill="#262626" text-anchor="start" textLength="297" lengthAdjust="spacingAndGlyphs" >Обрабатывать только горизонтали</text>
<rect x="507.5" y="698.2" width="102" height="26.4" fill="#e1e1e1" stroke="#2b70ae" stroke-width="2.6"/>
<text x="546.9" y="717.8" font-family='"Liberation Sans",sans-serif' font-size="17" fill="#262626" text-anchor="start" textLength="22" lengthAdjust="spacingAndGlyphs" >Да</text>
<rect x="629.7" y="698" width="103.5" height="27.5" fill="#e1e1e1" stroke="#adadad" stroke-width="1"/>
<text x="649.7" y="717.8" font-family='"Liberation Sans",sans-serif' font-size="17" fill="#262626" text-anchor="start" textLength="61.3" lengthAdjust="spacingAndGlyphs" >Отмена</text>
<rect x="752.5" y="698" width="103.5" height="27.5" fill="#e1e1e1" stroke="#adadad" stroke-width="1"/>
<text x="770.6" y="717.8" font-family='"Liberation Sans",sans-serif' font-size="17" fill="#262626" text-anchor="start" textLength="65.3" lengthAdjust="spacingAndGlyphs" >Помощь</text>
<path d="M536.5,679.5 L536.5,706 L542.5,700.5 L547,710.5 L550.5,709 L546.2,699.3 L554.2,699 Z" fill="#fff" stroke="#111" stroke-width="1.1" stroke-linejoin="miter"/>
</svg>
</div>
</body></html>
